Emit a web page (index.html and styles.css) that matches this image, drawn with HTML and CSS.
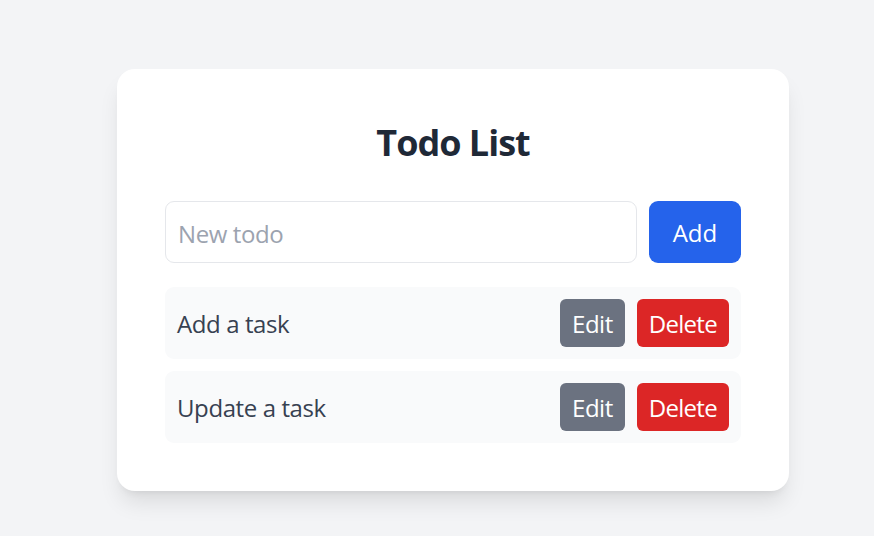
FILE: index.html
```html
<!DOCTYPE html>
<html lang="en">
<head>
<meta charset="utf-8">
<title>Todo List</title>
<link rel="stylesheet" href="styles.css">
</head>
<body>
<main class="page">
  <section class="card">
    <h1 class="title">Todo List</h1>
    <form class="add-form">
      <input class="add-input" type="text" placeholder="New todo">
      <button class="btn btn-add" type="button">Add</button>
    </form>
    <ul class="list">
      <li class="item">
        <span class="item-text">Add a task</span>
        <div class="actions">
          <button class="btn btn-edit" type="button">Edit</button>
          <button class="btn btn-delete" type="button">Delete</button>
        </div>
      </li>
      <li class="item">
        <span class="item-text">Update a task</span>
        <div class="actions">
          <button class="btn btn-edit" type="button">Edit</button>
          <button class="btn btn-delete" type="button">Delete</button>
        </div>
      </li>
    </ul>
  </section>
</main>
</body>
</html>
```
FILE: styles.css
```css
* { box-sizing: border-box; }
html, body {
  margin: 0;
  padding: 0;
  background: #f3f4f6;
  font-family: "Open Sans", "Noto Sans", "Liberation Sans", sans-serif;
  color: #374151;
}
.page {
  padding: 69px 0 0 117px;
  min-height: 536px;
}
.card {
  width: 672px;
  background: #ffffff;
  border-radius: 18px;
  padding: 48px;
  box-shadow: 0 15px 22px -4px rgba(0,0,0,0.1), 0 6px 9px -6px rgba(0,0,0,0.1);
}
.title {
  margin: 0 0 36px;
  padding-top: 2px;
  height: 48px;
  font-size: 36px;
  line-height: 48px;
  font-weight: 700;
  letter-spacing: -1px;
  text-align: center;
  color: #1f2937;
}
.add-form {
  display: flex;
  gap: 12px;
  margin: 0 0 24px;
}
.add-input {
  flex: 1;
  min-width: 0;
  height: 62px;
  border: 1px solid #e5e7eb;
  border-radius: 9px;
  padding: 13px 12px 11px;
  font: inherit;
  font-size: 24px;
  line-height: 36px;
  letter-spacing: -0.4px;
  color: #374151;
  outline: none;
}
.add-input::placeholder { color: #9ca3af; }
.btn {
  border: 0;
  font: inherit;
  font-size: 24px;
  line-height: 36px;
  letter-spacing: -0.5px;
  color: #ffffff;
  cursor: pointer;
}
.btn-add {
  background: #2563eb;
  border-radius: 9px;
  padding: 13px 24px 11px;
  letter-spacing: -0.1px;
}
.list {
  list-style: none;
  margin: 0;
  padding: 0;
  display: flex;
  flex-direction: column;
  gap: 12px;
}
.item {
  display: flex;
  align-items: center;
  justify-content: space-between;
  background: #f9fafb;
  border-radius: 9px;
  padding: 12px;
}
.item-text {
  padding-top: 2px;
  font-size: 24px;
  line-height: 34px;
  letter-spacing: -0.4px;
  color: #374151;
}
.actions {
  display: flex;
  gap: 12px;
}
.btn-edit, .btn-delete {
  padding: 7px 12px 5px;
  border-radius: 6px;
}
.btn-edit { background: #6b7280; }
.btn-delete { background: #dc2626; letter-spacing: -0.7px; }
```
